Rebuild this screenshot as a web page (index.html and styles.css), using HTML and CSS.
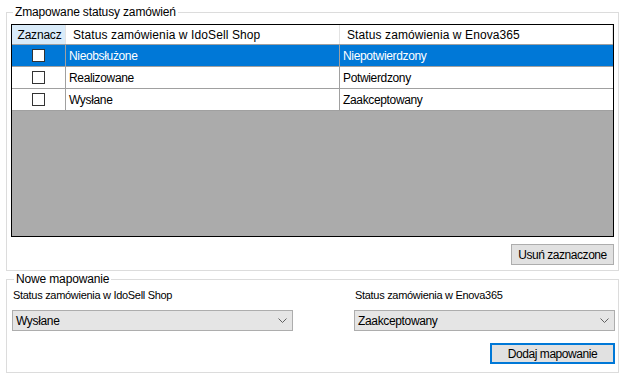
FILE: index.html
```html
<!DOCTYPE html>
<html lang="pl">
<head>
    <meta charset="UTF-8">
    <title>Mapowanie statusów</title>
    <link rel="stylesheet" href="styles.css">
</head>
<body>
    <fieldset class="group group-mapped">
        <legend>Zmapowane statusy zamówień</legend>

        <div class="grid">
            <div class="grid-row grid-head">
                <div class="cell cell-check head-active">Zaznacz</div>
                <div class="cell">Status zamówienia w IdoSell Shop</div>
                <div class="cell">Status zamówienia w Enova365</div>
            </div>
            <div class="grid-row selected">
                <div class="cell cell-check"><span class="checkbox"></span></div>
                <div class="cell">Nieobsłużone</div>
                <div class="cell">Niepotwierdzony</div>
            </div>
            <div class="grid-row">
                <div class="cell cell-check"><span class="checkbox"></span></div>
                <div class="cell">Realizowane</div>
                <div class="cell">Potwierdzony</div>
            </div>
            <div class="grid-row">
                <div class="cell cell-check"><span class="checkbox"></span></div>
                <div class="cell">Wysłane</div>
                <div class="cell">Zaakceptowany</div>
            </div>
            <div class="grid-empty"></div>
        </div>

        <div class="actions">
            <button class="btn btn-remove">Usuń zaznaczone</button>
        </div>
    </fieldset>

    <fieldset class="group group-new">
        <legend>Nowe mapowanie</legend>

        <div class="new-form">
            <div class="field">
                <label>Status zamówienia w IdoSell Shop</label>
                <div class="combo">
                    <span>Wysłane</span>
                    <svg class="chevron" width="9" height="5" viewBox="0 0 9 5">
                        <path d="M0.5 0.5 L4.5 4.5 L8.5 0.5" fill="none" stroke="#606060" stroke-width="1"/>
                    </svg>
                </div>
            </div>
            <div class="field">
                <label>Status zamówienia w Enova365</label>
                <div class="combo">
                    <span>Zaakceptowany</span>
                    <svg class="chevron" width="9" height="5" viewBox="0 0 9 5">
                        <path d="M0.5 0.5 L4.5 4.5 L8.5 0.5" fill="none" stroke="#606060" stroke-width="1"/>
                    </svg>
                </div>
                <div class="actions">
                    <button class="btn btn-add">Dodaj mapowanie</button>
                </div>
            </div>
        </div>
    </fieldset>
</body>
</html>
```

FILE: styles.css
```css
* {
    box-sizing: border-box;
}

body {
    margin: 0;
    width: 624px;
    height: 378px;
    background: #ffffff;
    font-family: 'Liberation Sans', Arial, sans-serif;
    font-size: 12px;
    color: #000000;
    overflow: hidden;
}

.group {
    border: 1px solid #dcdcdc;
    margin: 5px 5px 0 6px;
    padding: 5px 4px 5px 4px;
    min-width: 0;
}

.group legend {
    font-size: 12px;
    line-height: 14px;
    padding: 0 2px;
    margin-left: 2px;
    letter-spacing: -0.15px;
    color: #000;
}

.group-new {
    margin-top: 1px;
    padding: 2px 3px 8px 5px;
}

/* siatka */
.grid {
    height: 213px;
    border: 1px solid #000000;
    display: flex;
    flex-direction: column;
    background: #ababab;
}

.grid-row {
    display: grid;
    grid-template-columns: 54px 274px 1fr;
    height: 22px;
    background: #ffffff;
    border-bottom: 1px solid #a0a0a0;
}

.grid-head {
    height: 20px;
    border-bottom: 1px solid #a0a0a0;
}

.cell {
    display: flex;
    align-items: center;
    padding-left: 3px;
    border-right: 1px solid #a0a0a0;
    white-space: nowrap;
    overflow: hidden;
    letter-spacing: -0.35px;
}

.cell:last-child {
    border-right: none;
}

.grid-head .cell {
    padding-left: 7px;
    border-right: 1px solid #e3e3e3;
    letter-spacing: 0.1px;
}

.grid-head .cell-check {
    justify-content: center;
    padding-left: 2px;
    letter-spacing: -0.2px;
}

.head-active {
    background: #d9ebf9;
}

.cell-check {
    justify-content: center;
    padding-left: 0;
}

.checkbox {
    width: 13px;
    height: 13px;
    border: 1px solid #333333;
    background: #ffffff;
}

.grid-row.selected {
    background: #0078d7;
    color: #ffffff;
}

.grid-empty {
    flex: 1;
}

/* przyciski */
.actions {
    display: flex;
    justify-content: flex-end;
    margin-top: 7px;
}

.btn {
    height: 21px;
    padding: 0;
    background: #e1e1e1;
    border: 1px solid #adadad;
    font-family: 'Liberation Sans', Arial, sans-serif;
    font-size: 12px;
    letter-spacing: -0.45px;
    color: #000;
    white-space: nowrap;
}

.btn-remove {
    width: 103px;
}

.btn-add {
    width: 125px;
    border: 2px solid #0078d7;
}

/* nowe mapowanie */
.new-form {
    display: grid;
    grid-template-columns: 281px 1fr;
    column-gap: 61px;
}

.field label {
    display: block;
    font-size: 11px;
    line-height: 14px;
    padding-left: 1px;
    letter-spacing: -0.3px;
    margin-bottom: 8px;
}

.combo {
    height: 21px;
    display: flex;
    align-items: center;
    justify-content: space-between;
    padding: 0 5px 0 3px;
    background: #e5e5e5;
    border: 1px solid #adadad;
    letter-spacing: -0.35px;
}

.field .actions {
    margin-top: 12px;
}
```
